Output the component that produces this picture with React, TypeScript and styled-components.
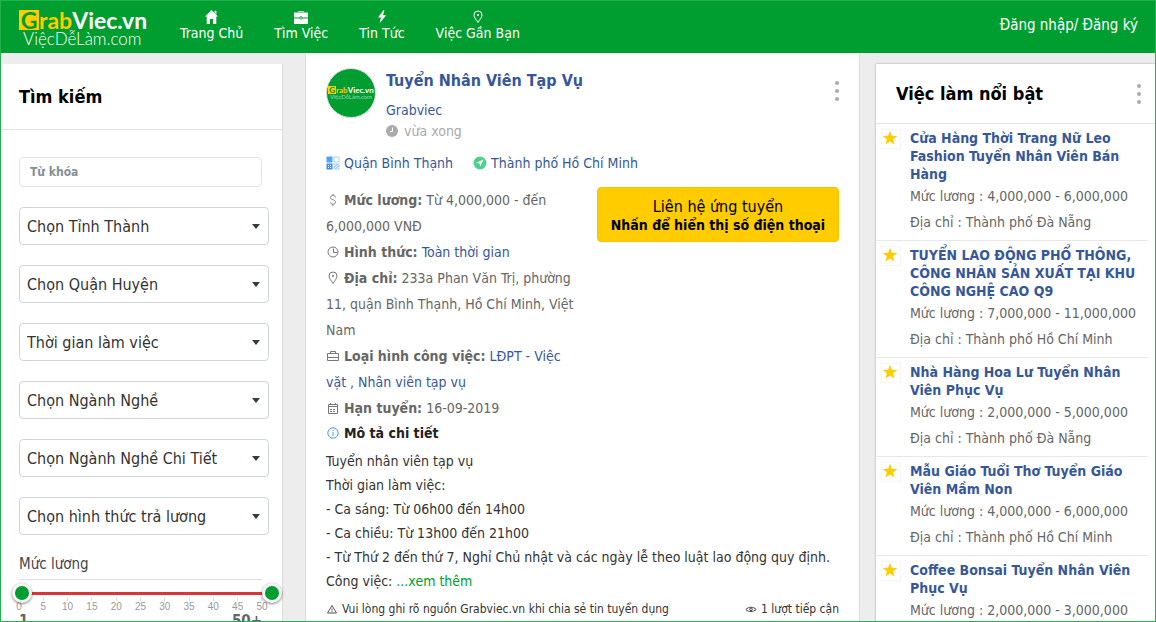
import React, { useState } from "react";
import styled, { createGlobalStyle, css } from "styled-components";

const green = "#009d30";
const blue = "#365899";

const GlobalStyle = createGlobalStyle`
  * { box-sizing: border-box; }
  body {
    margin: 0;
    background: #ededed;
    color: #333;
    font: 14px/24px "DejaVu Sans Condensed", "Noto Sans", sans-serif;
  }
  h1, h2, h3, p, ul, dl, dt, dd { margin: 0; padding: 0; }
  ul { list-style: none; }
  a { text-decoration: none; color: inherit; }
  button, input, select { font-family: inherit; }
`;

const Page = styled.div`
  display: flex;
  flex-direction: column;
  height: 100vh;
  overflow: hidden;
  border: 1px solid #22b14c;
`;

const TopBar = styled.header`
  display: flex;
  align-items: flex-start;
  flex: none;
  height: 52px;
  padding: 8px 17px 0 18px;
  background: ${green};
  color: #fff;
`;

const Logo = styled.a`
  display: block;
  width: 146px;
  font-family: Lato, sans-serif;
`;

const LogoName = styled.span`
  display: flex;
  align-items: center;
  height: 21px;
  font-size: 23px;
  font-weight: 700;
  line-height: 20px;
`;

const LogoInitial = styled.span`
  display: flex;
  align-items: center;
  justify-content: center;
  width: 20px;
  height: 20px;
  background: #fc0;
  color: ${green};
`;

const LogoYellow = styled.span`
  color: #fc0;
`;

const LogoTagline = styled.span`
  display: block;
  padding-left: 4px;
  font-size: 17px;
  font-weight: 300;
  line-height: 17px;
`;

const Nav = styled.nav`
  display: flex;
  gap: 31px;
  flex: 1;
  padding-left: 15px;
`;

const NavLink = styled.a`
  display: flex;
  flex-direction: column;
  align-items: center;
  line-height: 16px;
  white-space: nowrap;

  svg { height: 16px; }
`;

const AuthLink = styled.a`
  font-size: 15px;
  line-height: 32px;
  white-space: nowrap;
`;

const Columns = styled.div`
  display: flex;
  align-items: flex-start;
  flex: 1;
  min-height: 0;
`;

const SearchPanel = styled.aside`
  flex: none;
  width: 282px;
  margin: 11px 22px 0 0;
  background: #fff;
  border-right: 1px solid #ddd;
`;

const PanelTitle = styled.h2`
  padding: 0 18px;
  border-bottom: 1px solid #e3e3e3;
  color: #000;
  font-size: 18px;
  line-height: 65px;
`;

const SearchForm = styled.form`
  display: flex;
  flex-direction: column;
  gap: 20px;
  padding: 27px 13px 30px 18px;
`;

const KeywordInput = styled.input`
  width: 243px;
  height: 30px;
  padding: 0 10px;
  border: 1px solid #e1e3e5;
  border-radius: 4px;
  font-size: 12px;
  font-weight: 700;

  &::placeholder { color: #868e96; opacity: 1; }
`;

const SelectBox = styled.div`
  display: flex;
  align-items: center;
  position: relative;

  &::after {
    content: "";
    position: absolute;
    right: 9px;
    border: 4px solid transparent;
    border-top: 5px solid #343a40;
    border-bottom: 0;
    pointer-events: none;
  }
`;

const Select = styled.select`
  appearance: none;
  width: 100%;
  height: 38px;
  padding: 0 24px 0 7px;
  border: 1px solid #ced4da;
  border-radius: 4px;
  background: #fff;
  color: #333;
  font-size: 16px;
`;

const SalaryGroup = styled.fieldset`
  min-width: 0;
  margin: 0;
  padding: 0;
  border: 0;
`;

const SalaryLegend = styled.legend`
  width: 243px;
  padding: 0 0 6px;
  border-bottom: 1px solid #ddd;
  color: #444;
  font-size: 15px;
  line-height: 18px;
`;

const Slider = styled.div`
  position: relative;
  display: flex;
  align-items: center;
  height: 20px;
  margin: 3px -13px 0 -7px;
`;

const SliderTrack = styled.div`
  flex: 1;
  height: 3px;
  margin: 0 18px 0 10px;
  background: #d9363a;
`;

const SliderInput = styled.input`
  position: absolute;
  inset: 0;
  width: 100%;
  margin: 0;
  appearance: none;
  background: transparent;
  pointer-events: none;

  &::-webkit-slider-thumb {
    appearance: none;
    width: 20px;
    height: 20px;
    border: 3px solid #f6f6f6;
    border-radius: 50%;
    background: ${green};
    box-shadow: 0 1px 3px rgba(0, 0, 0, 0.5);
    pointer-events: auto;
  }
`;

const Scale = styled.ul`
  display: flex;
  justify-content: space-between;
  width: 257px;
  margin: -6px -7px 0;
  color: #999;
  font-family: "Liberation Sans", sans-serif;
  font-size: 10px;
  line-height: 11px;
`;

const ScaleMark = styled.li`
  display: flex;
  flex-direction: column;
  align-items: center;
  width: 14px;

  &::before {
    content: "";
    width: 1px;
    height: 4px;
    background: #ddd;
  }
`;

const SalaryRange = styled.p`
  display: flex;
  justify-content: space-between;
  width: 243px;
  color: #666;
  font-size: 15px;
  font-weight: 700;
  line-height: 18px;
`;

const Post = styled.main`
  flex: 1;
  min-width: 0;
  margin-right: 16px;
  padding: 12px 20px 20px;
  background: #fff;
  border: solid #ddd;
  border-width: 0 1px;
`;

const PostHeader = styled.header`
  display: flex;
  align-items: flex-start;
  gap: 10px;
`;

const Avatar = styled.a`
  display: flex;
  flex-direction: column;
  align-items: center;
  justify-content: center;
  width: 50px;
  height: 50px;
  margin-top: 3px;
  overflow: hidden;
  border: 1px solid #ddd;
  border-radius: 50%;
  background: ${green};
  color: #fff;
  font: 700 8px/8px Lato, sans-serif;
  white-space: nowrap;

  small { font-size: 6px; font-weight: 300; line-height: 6px; }
`;

const AvatarName = styled.span`
  display: flex;

  b { padding: 0 1px; background: #fc0; color: ${green}; }
`;

const PostHeading = styled.div`
  flex: 1;
`;

const PostTitle = styled.h1`
  color: ${blue};
  font-size: 16px;
  line-height: 32px;
`;

const Company = styled.a`
  display: block;
  color: ${blue};
  line-height: 26px;
`;

const PostTime = styled.p`
  display: flex;
  align-items: center;
  gap: 6px;
  color: #aaa;
  line-height: 16px;
`;

const MenuButton = styled.button`
  display: flex;
  flex-direction: column;
  align-items: center;
  gap: 4px;
  padding: 0;
  border: 0;
  background: none;
  cursor: pointer;

  i { width: 4px; height: 4px; border-radius: 50%; background: #aaa; }
`;

const PostMenu = styled(MenuButton)`
  margin-top: 16px;
`;

const Places = styled.div`
  display: flex;
  gap: 20px;
  margin-top: 12px;
  color: ${blue};
`;

const Place = styled.a`
  display: flex;
  align-items: center;
  gap: 4px;
`;

const Summary = styled.div`
  display: flex;
  align-items: flex-start;
  gap: 15px;
  margin-top: 12px;
`;

const Facts = styled.dl`
  flex: 1;
  color: #666;
  line-height: 26px;

  dt, dd { display: inline; }
  dt { font-weight: 700; }
  a { color: ${blue}; }
`;

const iconInline = css`
  display: inline-block;
  margin-right: 4px;
  vertical-align: -2px;
`;

const Fact = styled.div`
  svg { ${iconInline} }
`;

const ContactButton = styled.button`
  display: flex;
  flex-direction: column;
  align-items: center;
  justify-content: center;
  width: 242px;
  height: 55px;
  padding: 2px 0 0;
  border: 1px solid #f8c200;
  border-radius: 4px;
  background: #fc0;
  color: #000;
  font-size: 16px;
  line-height: 19px;
  cursor: pointer;

  strong { font-size: 14px; }
`;

const DescriptionTitle = styled.h2`
  color: #222;
  font-size: 14px;
  line-height: 24px;

  svg { ${iconInline} }
`;

const Description = styled.div`
  margin-top: 4px;
`;

const MoreLink = styled.a`
  color: ${green};
`;

const PostFooter = styled.footer`
  display: flex;
  justify-content: space-between;
  margin-top: 6px;
  font-size: 12px;
  line-height: 20px;

  svg { ${iconInline} }
`;

const Featured = styled.aside`
  flex: none;
  width: 279px;
  margin-top: 11px;
  background: #fff;
  box-shadow: 0 0 2px rgba(0, 0, 0, 0.35);
`;

const FeaturedHeader = styled.header`
  display: flex;
  align-items: center;
  justify-content: space-between;
  height: 60px;
  padding: 0 14px 0 20px;
  border-bottom: 1px solid #e3e3e3;

  h2 { color: #000; font-size: 18px; }
`;

const Job = styled.li`
  display: flex;
  align-items: flex-start;
  gap: 9px;
  margin-right: 7px;
  padding: 5px 0 5px 5px;
  border-bottom: 1px solid #e8e8e8;
`;

const StarBox = styled.span`
  display: flex;
  flex: none;
  width: 20px;
  height: 20px;
  border: 1px solid #f6f6f6;
`;

const JobInfo = styled.div`
  flex: 1;
  color: #666;
  line-height: 26px;
`;

const JobTitle = styled.h3`
  color: ${blue};
  font-size: 14px;
  line-height: 18px;
`;

const HomeIcon = () => (
  <svg width="15" height="16" viewBox="0 0 15 16" fill="#fff" aria-hidden="true">
    <path d="M7.5 1 14 7.6H12.3V15H9V10H6V15H2.7V7.6H1L7.5 1ZM10.6 1.8h1.8v3.4l-1.8-1.8Z" />
  </svg>
);
const CaseIcon = () => (
  <svg width="14" height="16" viewBox="0 0 14 16" aria-hidden="true">
    <path d="M4.500 3.500V2.500h5v1" fill="none" stroke="#b6e2c2" />
    <path d="M0 3.500h14v5H8.600a1.700 1.700 0 0 0-3.200 0H0ZM0 9.500h5.500a1.700 1.700 0 0 0 3 0H14V15H0Z" fill="#fff" />
    <circle cx="7" cy="9" r=".8" fill="#fff" />
  </svg>
);
const BoltIcon = () => (
  <svg width="10" height="16" viewBox="0 0 10 16" fill="#fff" aria-hidden="true">
    <path d="M6.500 1.200 1 8.600h3L2.600 14.200 9.200 6.200H6L7.400 1.200Z" />
  </svg>
);
const PinIcon = ({ color = "#777" }: { color?: string }) => (
  <svg width="14" height="14" viewBox="0 0 14 14" fill="none" stroke={color} aria-hidden="true">
    <path d="M7 12.500C5.400 9.600 3 7.600 3 5a4 4 0 0 1 8 0c0 2.600-2.400 4.600-4 7.500Z" />
    <circle cx="7" cy="5" r="1" fill={color} stroke="none" />
  </svg>
);
const TimeIcon = () => (
  <svg width="12" height="12" viewBox="0 0 12 12" aria-hidden="true">
    <circle cx="6" cy="6" r="6" fill="#aaa" />
    <path d="M6.500 2.500V6.500H4" fill="none" stroke="#fff" />
  </svg>
);
const DistrictIcon = () => (
  <svg width="14" height="14" viewBox="0 0 14 14" aria-hidden="true">
    <path d="M.5.500h6v6h-6Z" fill="#4da3ff" />
    <path d="M8 1h5v5H8Z" fill="#fff" stroke="#a9cdf5" />
    <path d="M.5 7.500h6v6h-6Z" fill="#3f8fe8" />
    <path d="M2 9h1v1H2ZM4 9h1v1H4ZM2 11h1v1H2ZM4 11h1v1H4Z" fill="#fff" />
    <path d="M7.500 7.500h6v6h-6Z" fill="#a9cdf5" />
    <path d="m8 10 2-2M8.500 12.500l4-4M11 13l2-2" stroke="#fff" />
  </svg>
);
const CityIcon = () => (
  <svg width="14" height="14" viewBox="0 0 14 14" aria-hidden="true">
    <circle cx="7" cy="7" r="6.500" fill="#4fd18b" />
    <path d="M10.500 3.500 3.500 6.800l3 .7.700 3Z" fill="#fff" />
  </svg>
);
const DollarIcon = () => (
  <svg width="14" height="14" viewBox="0 0 14 14" fill="none" stroke="#888" aria-hidden="true">
    <path d="M9.500 4.500c0-1.200-1-2-2.500-2s-2.500.8-2.500 2S5.500 6.400 7 6.800s2.500 1 2.500 2.300-1 2.100-2.500 2.100-2.500-.8-2.500-2M7 1v1.500M7 11.200V13" />
  </svg>
);
const ClockIcon = () => (
  <svg width="14" height="14" viewBox="0 0 14 14" fill="none" stroke="#777" aria-hidden="true">
    <circle cx="7" cy="7" r="5" />
    <path d="M7.500 3.500V7.500h3.500" />
  </svg>
);
const BagIcon = () => (
  <svg width="14" height="14" viewBox="0 0 14 14" fill="none" stroke="#777" aria-hidden="true">
    <path d="M1.500 4.500h11v7h-11ZM4.500 4.500v-2h5v2M1.500 8.500h11" />
  </svg>
);
const CalendarIcon = () => (
  <svg width="14" height="14" viewBox="0 0 14 14" fill="none" stroke="#777" aria-hidden="true">
    <path d="M2.500 3.500h9v9h-9ZM2.500 5.500h9M4.500 2v2M9.500 2v2" />
    <path d="M4 8.500h6M4 10.500h6" strokeDasharray="2 1" />
  </svg>
);
const InfoIcon = () => (
  <svg width="14" height="14" viewBox="0 0 14 14" fill="none" stroke="#4a97f7" aria-hidden="true">
    <circle cx="7" cy="7" r="5.200" />
    <path d="M7 6v4M7 4v1" />
  </svg>
);
const WarningIcon = () => (
  <svg width="12" height="12" viewBox="0 0 12 12" fill="none" stroke="#555" aria-hidden="true">
    <path d="M6 2.500 10.500 10H1.500ZM6 5.500v2M6 8.200v1" />
  </svg>
);
const EyeIcon = () => (
  <svg width="12" height="12" viewBox="0 0 12 12" fill="none" stroke="#444" aria-hidden="true">
    <path d="M.8 6.500C3.500 3.500 8.500 3.500 11.200 6.500 8.500 9.200 3.500 9.200.8 6.500Z" />
    <circle cx="6" cy="6.300" r="1.300" />
  </svg>
);
const StarIcon = () => (
  <svg width="16" height="16" viewBox="0 0 16 16" fill="#fc0" aria-hidden="true">
    <path d="m8 .8 1.900 5 5.500.1-4.300 3.400 1.500 5.300L8 11.600l-4.600 3 1.500-5.300L.6 5.900l5.500-.1Z" />
  </svg>
);

const filters = [
  "Chọn Tỉnh Thành",
  "Chọn Quận Huyện",
  "Thời gian làm việc",
  "Chọn Ngành Nghề",
  "Chọn Ngành Nghề Chi Tiết",
  "Chọn hình thức trả lương",
];

const marks = [0, 5, 10, 15, 20, 25, 30, 35, 40, 45, 50];

const jobs = [
  { title: "Cửa Hàng Thời Trang Nữ Leo Fashion Tuyển Nhân Viên Bán Hàng", pay: "4,000,000 - 6,000,000", place: "Thành phố Đà Nẵng" },
  { title: "TUYỂN LAO ĐỘNG PHỔ THÔNG, CÔNG NHÂN SẢN XUẤT TẠI KHU CÔNG NGHỆ CAO Q9", pay: "7,000,000 - 11,000,000", place: "Thành phố Hồ Chí Minh" },
  { title: "Nhà Hàng Hoa Lư Tuyển Nhân Viên Phục Vụ", pay: "2,000,000 - 5,000,000", place: "Thành phố Đà Nẵng" },
  { title: "Mẫu Giáo Tuổi Thơ Tuyển Giáo Viên Mầm Non", pay: "4,000,000 - 6,000,000", place: "Thành phố Hồ Chí Minh" },
  { title: "Coffee Bonsai Tuyển Nhân Viên Phục Vụ", pay: "2,000,000 - 3,000,000", place: "" },
];

export default function App() {
  const [low, setLow] = useState(1);
  const [high, setHigh] = useState(50);

  return (
    <Page>
      <GlobalStyle />
      <TopBar>
        <Logo href="#">
          <LogoName>
            <LogoInitial>G</LogoInitial>
            <LogoYellow>rab</LogoYellow>Viec.vn
          </LogoName>
          <LogoTagline>ViệcDễLàm.com</LogoTagline>
        </Logo>
        <Nav>
          <NavLink href="#"><HomeIcon />Trang Chủ</NavLink>
          <NavLink href="#"><CaseIcon />Tìm Việc</NavLink>
          <NavLink href="#"><BoltIcon />Tin Tức</NavLink>
          <NavLink href="#"><PinIcon color="#fff" />Việc Gần Bạn</NavLink>
        </Nav>
        <AuthLink href="#">Đăng nhập/ Đăng ký</AuthLink>
      </TopBar>

      <Columns>
        <SearchPanel>
          <PanelTitle>Tìm kiếm</PanelTitle>
          <SearchForm>
            <KeywordInput type="text" placeholder="Từ khóa" aria-label="Từ khóa" />
            {filters.map((name) => (
              <SelectBox key={name}>
                <Select aria-label={name}>
                  <option>{name}</option>
                </Select>
              </SelectBox>
            ))}
            <SalaryGroup>
              <SalaryLegend>Mức lương</SalaryLegend>
              <Slider>
                <SliderTrack />
                <SliderInput type="range" min={1} max={50} value={low} aria-label="Mức lương từ"
                  onChange={(e) => setLow(Math.min(+e.target.value, high))} />
                <SliderInput type="range" min={1} max={50} value={high} aria-label="Mức lương đến"
                  onChange={(e) => setHigh(Math.max(+e.target.value, low))} />
              </Slider>
              <Scale>
                {marks.map((mark) => <ScaleMark key={mark}>{mark}</ScaleMark>)}
              </Scale>
              <SalaryRange>
                <span>{low}</span>
                <span>{high === 50 ? "50+" : high}</span>
              </SalaryRange>
            </SalaryGroup>
          </SearchForm>
        </SearchPanel>

        <Post>
          <PostHeader>
            <Avatar href="#" aria-label="Grabviec">
              <AvatarName><b>G</b><LogoYellow>rab</LogoYellow>Viec.vn</AvatarName>
              <small>ViệcDễLàm.com</small>
            </Avatar>
            <PostHeading>
              <PostTitle>Tuyển Nhân Viên Tạp Vụ</PostTitle>
              <Company href="#">Grabviec</Company>
              <PostTime><TimeIcon />vừa xong</PostTime>
            </PostHeading>
            <PostMenu type="button" aria-label="Tùy chọn"><i /><i /><i /></PostMenu>
          </PostHeader>
          <Places>
            <Place href="#"><DistrictIcon />Quận Bình Thạnh</Place>
            <Place href="#"><CityIcon />Thành phố Hồ Chí Minh</Place>
          </Places>
          <Summary>
            <Facts>
              <Fact><dt><DollarIcon />Mức lương:</dt> <dd>Từ 4,000,000 - đến 6,000,000 VNĐ</dd></Fact>
              <Fact><dt><ClockIcon />Hình thức:</dt> <dd><a href="#">Toàn thời gian</a></dd></Fact>
              <Fact><dt><PinIcon />Địa chỉ:</dt> <dd>233a Phan Văn Trị, phường 11, quận Bình Thạnh, Hồ Chí Minh, Việt Nam</dd></Fact>
              <Fact><dt><BagIcon />Loại hình công việc:</dt> <dd><a href="#">LĐPT - Việc vặt</a> , <a href="#">Nhân viên tạp vụ</a></dd></Fact>
              <Fact><dt><CalendarIcon />Hạn tuyển:</dt> <dd>16-09-2019</dd></Fact>
            </Facts>
            <ContactButton type="button">
              <span>Liên hệ ứng tuyển</span>
              <strong>Nhấn để hiển thị số điện thoại</strong>
            </ContactButton>
          </Summary>
          <DescriptionTitle><InfoIcon />Mô tả chi tiết</DescriptionTitle>
          <Description>
            <p>Tuyển nhân viên tạp vụ</p>
            <p>Thời gian làm việc:</p>
            <p>- Ca sáng: Từ 06h00 đến 14h00</p>
            <p>- Ca chiều: Từ 13h00 đến 21h00</p>
            <p>- Từ Thứ 2 đến thứ 7, Nghỉ Chủ nhật và các ngày lễ theo luật lao động quy định.</p>
            <p>Công việc: <MoreLink href="#">...xem thêm</MoreLink></p>
          </Description>
          <PostFooter>
            <span><WarningIcon />Vui lòng ghi rõ nguồn Grabviec.vn khi chia sẻ tin tuyển dụng</span>
            <span><EyeIcon />1 lượt tiếp cận</span>
          </PostFooter>
        </Post>

        <Featured>
          <FeaturedHeader>
            <h2>Việc làm nổi bật</h2>
            <MenuButton type="button" aria-label="Tùy chọn"><i /><i /><i /></MenuButton>
          </FeaturedHeader>
          <ul>
            {jobs.map((job) => (
              <Job key={job.title}>
                <StarBox><StarIcon /></StarBox>
                <JobInfo>
                  <JobTitle><a href="#">{job.title}</a></JobTitle>
                  <p>Mức lương : {job.pay}</p>
                  {job.place && <p>Địa chỉ : {job.place}</p>}
                </JobInfo>
              </Job>
            ))}
          </ul>
        </Featured>
      </Columns>
    </Page>
  );
}
